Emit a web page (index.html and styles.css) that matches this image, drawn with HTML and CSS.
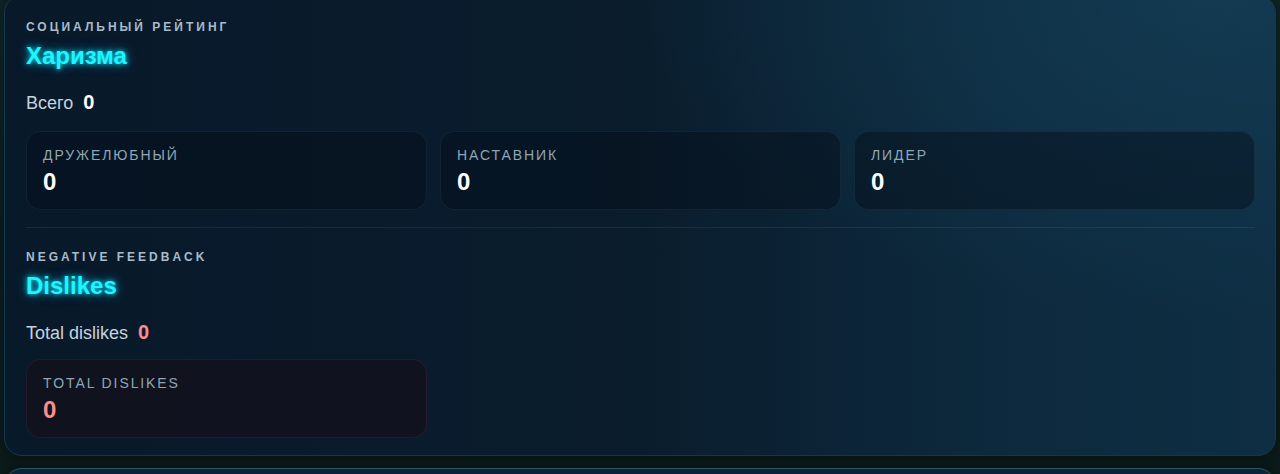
FILE: index.html
```html
<!DOCTYPE html>
<html lang="ru">
<head>
<meta charset="utf-8">
<title>Рейтинг</title>
<link rel="stylesheet" href="styles.css">
</head>
<body>
<main class="page">
  <section class="panel">
    <div class="block">
      <div class="kicker">Социальный рейтинг</div>
      <h2 class="title">Харизма</h2>
      <div class="total"><span class="total-label">Всего</span><span class="total-value">0</span></div>
      <div class="grid">
        <div class="stat"><div class="stat-label">Дружелюбный</div><div class="stat-value">0</div></div>
        <div class="stat"><div class="stat-label">Наставник</div><div class="stat-value">0</div></div>
        <div class="stat"><div class="stat-label">Лидер</div><div class="stat-value">0</div></div>
      </div>
    </div>
    <div class="block block-last">
      <div class="kicker">Negative feedback</div>
      <h2 class="title">Dislikes</h2>
      <div class="total"><span class="total-label">Total dislikes</span><span class="total-value neg">0</span></div>
      <div class="grid">
        <div class="stat stat-neg"><div class="stat-label">Total dislikes</div><div class="stat-value neg">0</div></div>
      </div>
    </div>
  </section>
  <section class="panel panel-next"></section>
</main>
</body>
</html>
```

FILE: styles.css
```css
* { box-sizing: border-box; }
html, body {
  margin: 0;
  height: 100%;
  overflow: hidden;
}
body {
  font-family: "Liberation Sans", Arial, sans-serif;
  background:
    linear-gradient(180deg, #0e2426 0%, #0b1c1f 60%, #0c1a1a 100%);
  color: #d5e1ea;
}
.page {
  height: 100vh;
  overflow: hidden;
  padding: 0 4px 0 4px;
}
.panel {
  margin-top: -5px;
  border: 1px solid #17384c;
  border-radius: 18px;
  padding: 0 20px 0 21px;
  background:
    radial-gradient(ellipse 45% 70% at 95% 0%, rgba(20, 62, 86, 0.75), rgba(20, 62, 86, 0) 100%),
    linear-gradient(90deg, #08192a 0%, #0a1d2d 50%, #0d2a3e 80%, #0e2e43 100%);
  box-shadow: 0 0 12px rgba(0, 0, 0, 0.35);
}
.panel-next {
  margin-top: 12px;
  height: 40px;
  border-color: #2f5566;
  background: #0c2533;
}
.block {
  padding: 25px 0 17px;
  border-bottom: 1px solid rgba(120, 170, 200, 0.12);
}
.block-last {
  padding-top: 23px;
  padding-bottom: 17px;
  border-bottom: none;
}
.block-last .grid {
  margin-top: 15px;
}
.kicker {
  font-size: 12px;
  font-weight: 700;
  letter-spacing: 3px;
  text-transform: uppercase;
  color: #a8bccb;
  line-height: 13px;
}
.title {
  margin: 8px 0 0;
  font-size: 24px;
  font-weight: 700;
  line-height: 28px;
  color: #1ff4ff;
  text-shadow: 0 0 5px rgba(0, 235, 255, 0.95), 0 0 12px rgba(0, 210, 255, 0.6);
}
.total {
  margin-top: 21px;
  display: flex;
  align-items: baseline;
  gap: 10px;
  line-height: 22px;
}
.total-label {
  font-size: 18px;
  color: #c5d3de;
}
.total-value {
  font-size: 20px;
  font-weight: 700;
  color: #ffffff;
}
.grid {
  margin-top: 17px;
  display: grid;
  grid-template-columns: repeat(3, 1fr);
  gap: 13px;
}
.stat {
  height: 79px;
  padding: 15px 16px 0;
  border-radius: 15px;
  border: 1px solid rgba(130, 180, 210, 0.09);
  background: rgba(4, 14, 24, 0.45);
}
.stat-neg {
  background: rgba(22, 14, 24, 0.6);
  border-color: rgba(200, 90, 110, 0.12);
}
.stat-label {
  font-size: 14px;
  letter-spacing: 1.9px;
  text-transform: uppercase;
  color: #8fa6b6;
  line-height: 16px;
}
.stat-value {
  margin-top: 6px;
  font-size: 24px;
  font-weight: 700;
  color: #ffffff;
  line-height: 26px;
}
.total-value.neg,
.stat-value.neg {
  color: #ff8c8c;
}
```
